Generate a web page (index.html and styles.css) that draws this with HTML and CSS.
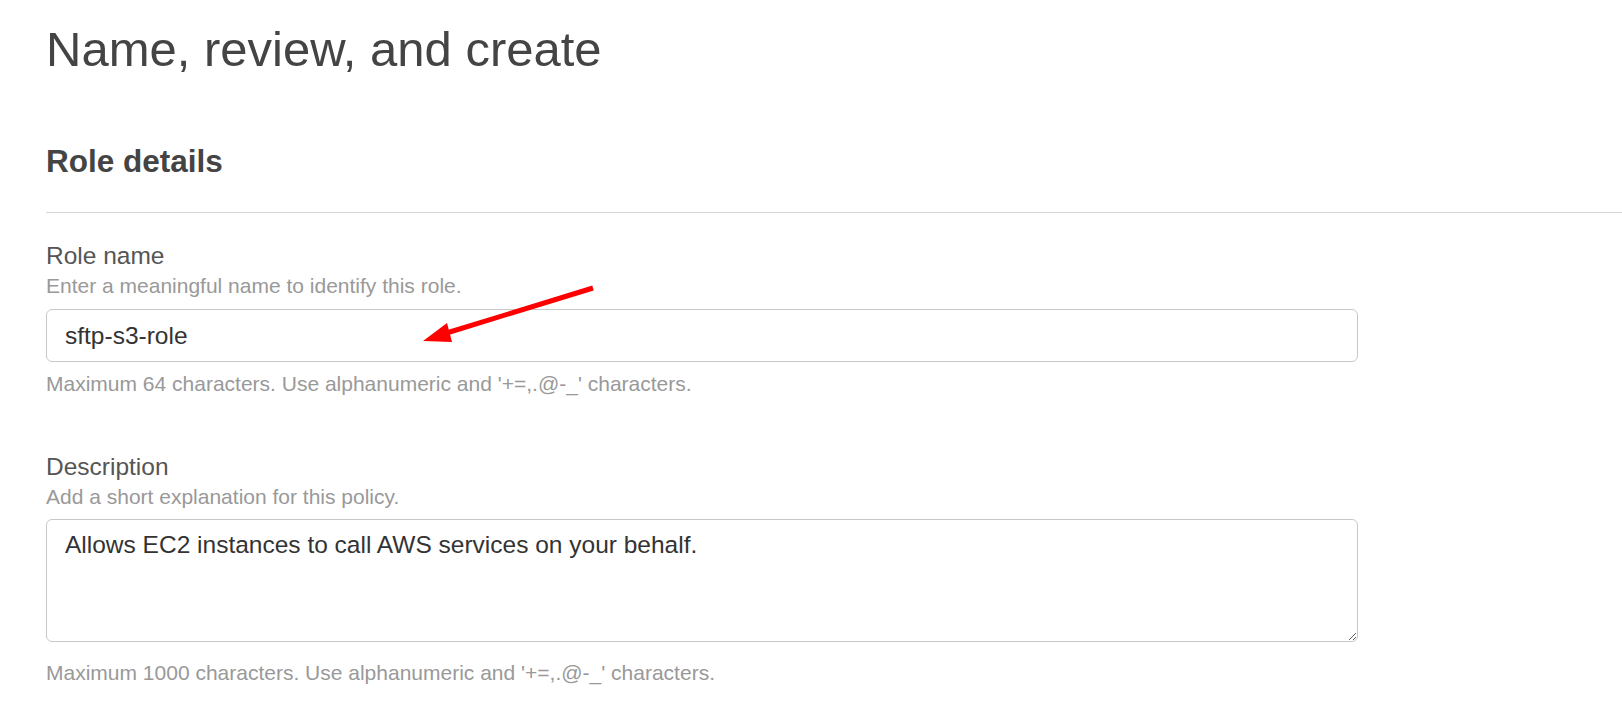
FILE: index.html
```html
<!DOCTYPE html>
<html lang="en">
<head>
<meta charset="utf-8">
<title>Name, review, and create</title>
<link rel="stylesheet" href="styles.css">
</head>
<body>
<main class="page">
  <h1 class="page-title">Name, review, and create</h1>
  <section class="panel">
    <h2 class="panel-title">Role details</h2>
    <div class="panel-body">
      <div class="field field-name">
        <label class="field-label" for="role-name">Role name</label>
        <p class="field-desc">Enter a meaningful name to identify this role.</p>
        <input class="text-input" id="role-name" type="text" value="sftp-s3-role">
        <p class="field-hint">Maximum 64 characters. Use alphanumeric and '+=,.@-_' characters.</p>
      </div>
      <div class="field field-desc-block">
        <label class="field-label" for="role-desc">Description</label>
        <p class="field-desc">Add a short explanation for this policy.</p>
        <textarea class="text-area" id="role-desc">Allows EC2 instances to call AWS services on your behalf.</textarea>
        <p class="field-hint">Maximum 1000 characters. Use alphanumeric and '+=,.@-_' characters.</p>
      </div>
    </div>
  </section>
  <svg class="annotation-arrow" width="200" height="80" viewBox="0 0 200 80" aria-hidden="true">
    <line x1="193" y1="8" x2="40" y2="55" stroke="#ff0000" stroke-width="5" stroke-linecap="butt"/>
    <polygon points="23,61 47,43 52,62" fill="#ff0000"/>
  </svg>
</main>
</body>
</html>
```

FILE: styles.css
```css
* {
  box-sizing: border-box;
}

html, body {
  margin: 0;
  padding: 0;
  background: #ffffff;
}

body {
  font-family: "Liberation Sans", Arial, Helvetica, sans-serif;
  color: #444444;
}

.page {
  position: relative;
  padding: 21px 0 0 46px;
  min-height: 710px;
}

.page-title {
  margin: 0;
  font-size: 49px;
  line-height: 56px;
  font-weight: 400;
  color: #444444;
}

.panel {
  margin-top: 64px;
}

.panel-title {
  margin: 0;
  padding-bottom: 31px;
  font-size: 31.5px;
  line-height: 40px;
  font-weight: 700;
  color: #444444;
  border-bottom: 1px solid #d5d5d5;
}

.panel-body {
  display: flex;
  flex-direction: column;
  gap: 55px;
  padding-top: 28px;
  width: 1312px;
}

.field {
  display: flex;
  flex-direction: column;
}

.field-label {
  font-size: 24.5px;
  line-height: 30px;
  color: #555555;
}

.field-desc {
  margin: 2px 0 0;
  font-size: 21px;
  line-height: 26px;
  color: #999999;
}

.field-hint {
  margin: 9px 0 0;
  font-size: 21px;
  line-height: 26px;
  color: #999999;
}

.text-input,
.text-area {
  margin-top: 10px;
  width: 100%;
  font-family: "Liberation Sans", Arial, Helvetica, sans-serif;
  font-size: 24.5px;
  color: #333333;
  background: #ffffff;
  border: 1px solid #c8c8c8;
  border-radius: 6px;
  outline: none;
}

.text-input {
  height: 53px;
  padding: 0 18px;
  line-height: 30px;
}

.text-area {
  display: block;
  height: 123px;
  margin-top: 9px;
  padding: 10px 18px;
  line-height: 30px;
  resize: vertical;
}

.field-desc-block .field-hint {
  margin-top: 18px;
}

.annotation-arrow {
  position: absolute;
  left: 400px;
  top: 280px;
  overflow: visible;
}
```
